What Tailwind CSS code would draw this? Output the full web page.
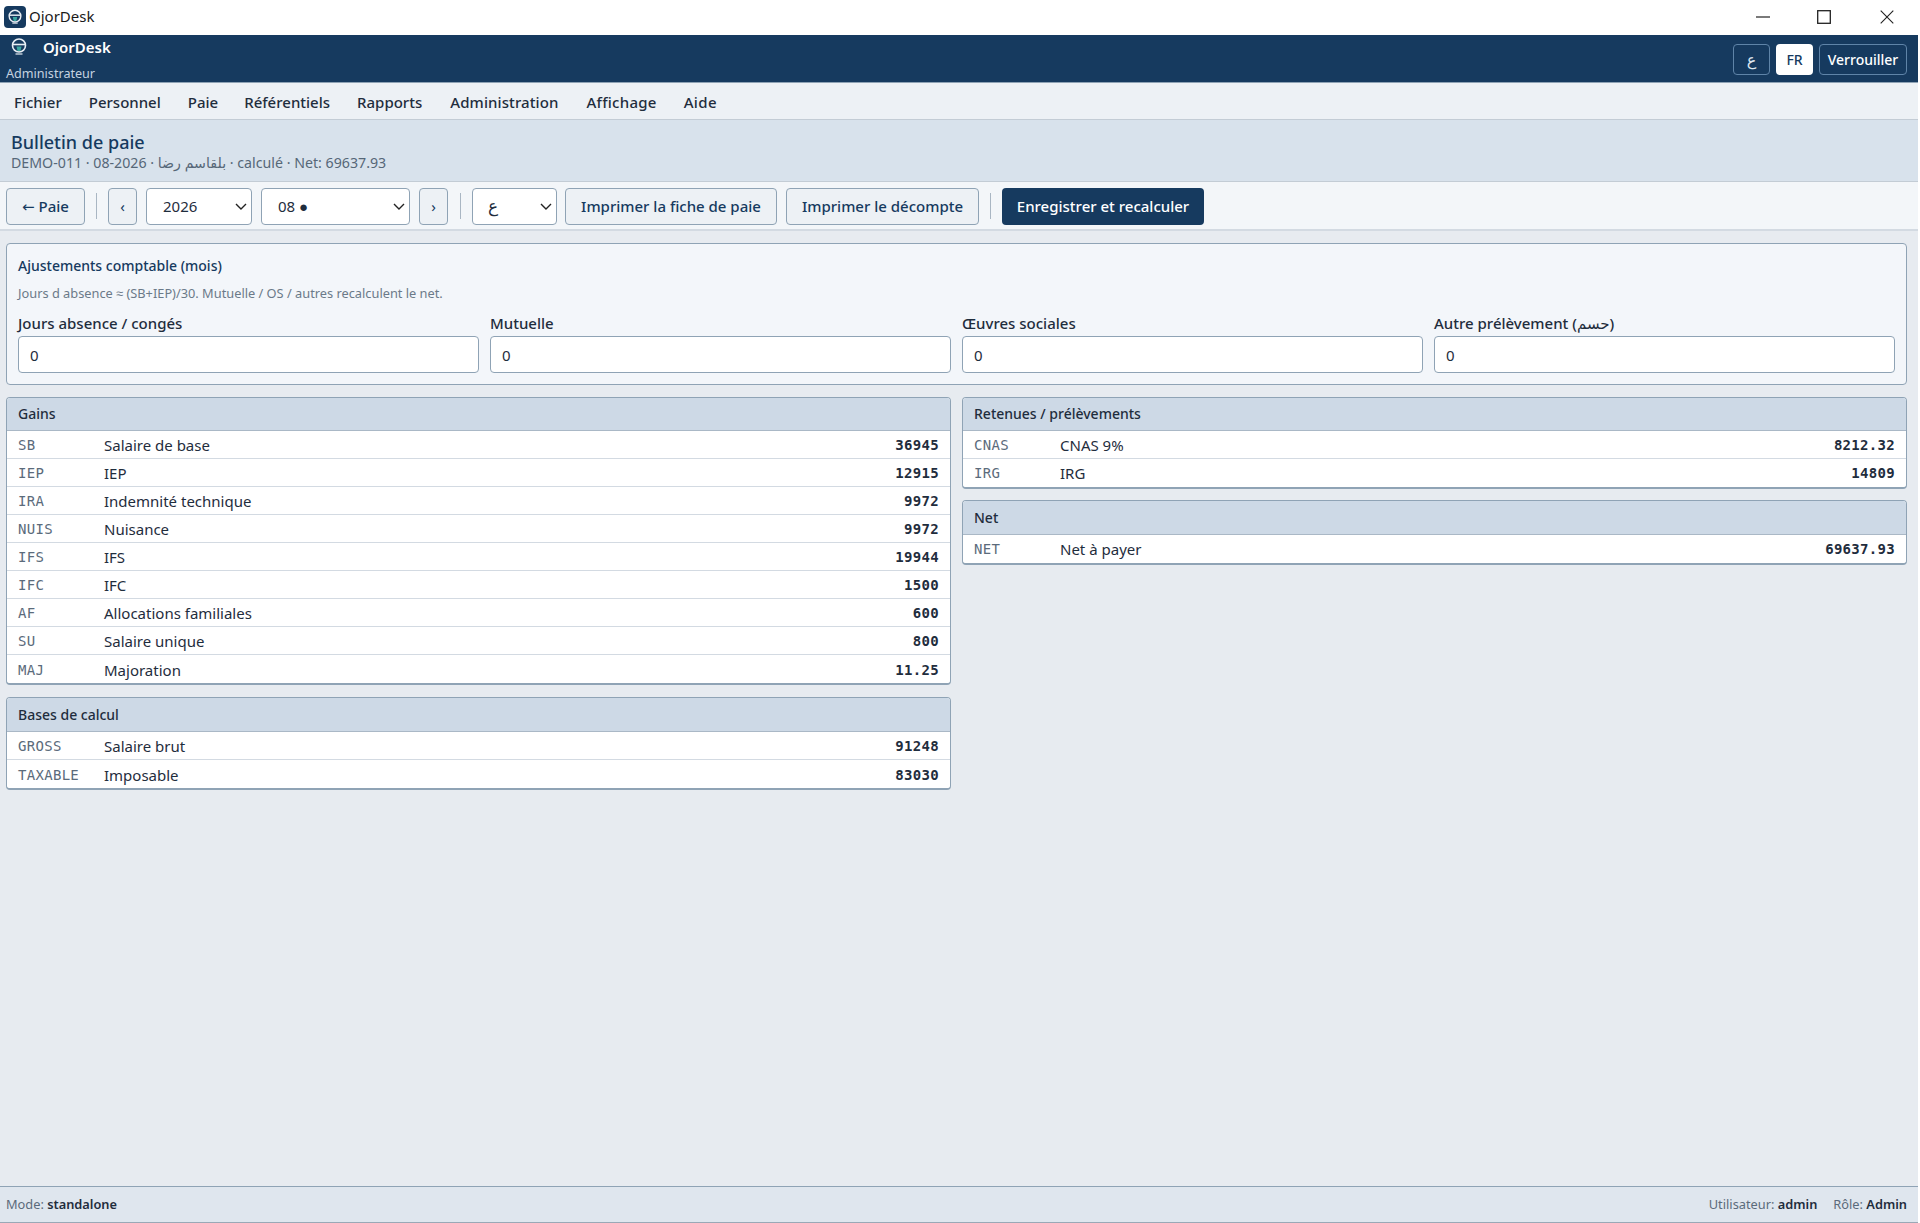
<!DOCTYPE html>
<html lang="fr"><head><meta charset="utf-8"><title>OjorDesk</title>
<script src="https://cdn.jsdelivr.net/npm/@tailwindcss/browser@4"></script></head>
<body class="h-[1223px] w-[1920px] overflow-hidden bg-white font-['Noto_Sans','Liberation_Sans','DejaVu_Sans',sans-serif] text-[#1f2d3d]">
<div class="flex h-[1223px] w-[1918px] flex-col border-b border-[#9aa8b6] bg-[#e7ebf0]">
 <!-- title bar -->
 <div class="flex h-[35px] shrink-0 items-center bg-white pb-[2px] pl-1">
  <div class="flex h-[22px] w-[22px] items-center justify-center rounded-[4px] bg-[#163a5f]">
   <svg viewBox="0 0 20 20" class="h-[18px] w-[18px]" fill="none" stroke="#e8eef4" stroke-width="1.6"><circle cx="10" cy="9" r="6.5"/><path d="M3.8 8h12.4"/><path d="M7 16.8h6" stroke-width="1.2"/><path d="M7.5 10h5l-1 4.5h-3z" fill="#3aa6a0" stroke="none"/></svg>
  </div>
  <span class="ml-[3px] text-[15px] text-[#1a1a1a]">OjorDesk</span>
  <div class="ml-auto flex items-center">
   <div class="flex w-[62px] justify-center"><svg width="14" height="14" viewBox="0 0 14 14" stroke="#222" stroke-width="1.2"><path d="M0 7h14"/></svg></div>
   <div class="flex w-[62px] justify-center pr-[2px]"><svg width="14" height="14" viewBox="0 0 14 14" fill="none" stroke="#222" stroke-width="1.3"><rect x=".7" y=".7" width="12.6" height="12.6"/></svg></div>
   <div class="flex w-[62px] justify-center"><svg width="14" height="14" viewBox="0 0 14 14" stroke="#222" stroke-width="1.1"><path d="M.7.7l12.6 12.6M13.3.7L.7 13.3"/></svg></div>
  </div>
 </div>
 <!-- app header -->
 <div class="flex h-[48px] shrink-0 justify-between border-b border-[#8fa3b5] bg-[#163a5f] pl-[6px] pr-[11px]">
  <div class="flex flex-col text-white">
   <div class="flex h-[27px] items-start">
    <svg viewBox="0 0 20 20" class="ml-[3px] mt-[2px] h-[20px] w-[20px]" fill="none" stroke="#e8eef4" stroke-width="1.6"><circle cx="10" cy="8.5" r="6.5"/><path d="M3.8 7.5h12.4"/><path d="M6.5 17h7" stroke-width="1.2"/><path d="M7.5 9.5h5l-1 4.5h-3z" fill="#3aa6a0" stroke="none"/></svg>
    <span class="ml-[14px] mt-[1px] text-[15px] leading-[22px] font-semibold">OjorDesk</span>
   </div>
   <span class="mt-[5px] text-[12.6px] leading-[16px] text-[#c5d3e0]">Administrateur</span>
  </div>
  <div class="flex items-center gap-[6px] pt-[1px]">
   <button class="flex h-[31px] w-[37px] items-center justify-center rounded-[4px] border border-[#5f84a8] text-[16px] text-[#dce6ef]">ع</button>
   <button class="h-[31px] w-[37px] rounded-[4px] bg-white text-[14px] font-medium text-[#163a5f]">FR</button>
   <button class="h-[31px] w-[88px] rounded-[4px] border border-[#5f84a8] text-[14px] font-medium text-white">Verrouiller</button>
  </div>
 </div>
 <!-- menu -->
 <div class="flex h-[37px] shrink-0 items-center gap-[27px] border-b border-[#c3ccd5] bg-[#edf1f5] pl-[14px] pt-[2px] text-[15px] font-medium text-[#1f2d3d]">
  <span>Fichier</span><span>Personnel</span><span>Paie</span><span class="-ml-[1px]">Référentiels</span><span>Rapports</span><span class="ml-[1px] tracking-[.1px]">Administration</span><span class="ml-[1px] tracking-[.25px]">Affichage</span><span class="tracking-[.4px]">Aide</span>
 </div>
 <!-- page title -->
 <div class="flex h-[62px] shrink-0 flex-col justify-center border-b border-[#c3ccd5] bg-[#d8e2ec] pl-[11px] pt-[2px]">
  <div class="text-[18px] leading-[22px] font-medium text-[#163a5f]">Bulletin de paie</div>
  <div class="text-[14.2px] leading-[20px] text-[#566778]">DEMO-011 · 08-2026 · بلقاسم رضا · calculé · Net: 69637.93</div>
 </div>
 <!-- toolbar -->
 <div class="flex h-[49px] shrink-0 items-center border-b-2 border-[#d3dae2] bg-[#f3f6f9] pl-[6px] pt-[1px] text-[15px]">
  <button class="h-[37px] w-[79px] rounded-[4px] border border-[#8fa3b5] bg-[#edf1f5] font-['Noto_Sans','DejaVu_Sans',sans-serif] font-medium text-[#163a5f]">← Paie</button>
  <div class="ml-[11px] mr-[11px] h-[26px] w-px bg-[#a9b6c3]"></div>
  <button class="h-[37px] w-[29px] rounded-[4px] border border-[#8fa3b5] bg-[#edf1f5] text-[#163a5f]">‹</button>
  <div class="relative ml-[9px] w-[106px]">
   <select class="h-[37px] w-full appearance-none rounded-[4px] border border-[#8fa3b5] bg-white pl-4"><option>2026</option></select>
   <svg class="pointer-events-none absolute right-[5px] top-[15px]" width="12" height="8" viewBox="0 0 12 8" fill="none" stroke="#222" stroke-width="1.4"><path d="M1 1l5 5 5-5"/></svg>
  </div>
  <div class="relative ml-[9px] w-[149px]">
   <select class="h-[37px] w-full appearance-none rounded-[4px] border border-[#8fa3b5] bg-white pl-4"><option>08 ●</option></select>
   <svg class="pointer-events-none absolute right-[5px] top-[15px]" width="12" height="8" viewBox="0 0 12 8" fill="none" stroke="#222" stroke-width="1.4"><path d="M1 1l5 5 5-5"/></svg>
  </div>
  <button class="ml-[9px] h-[37px] w-[29px] rounded-[4px] border border-[#8fa3b5] bg-[#edf1f5] text-[#163a5f]">›</button>
  <div class="ml-[12px] mr-[11px] h-[26px] w-px bg-[#a9b6c3]"></div>
  <div class="relative w-[85px]">
   <select class="h-[37px] w-full appearance-none rounded-[4px] border border-[#8fa3b5] bg-white pl-[15px] text-[17px]"><option>ع</option></select>
   <svg class="pointer-events-none absolute right-[5px] top-[15px]" width="12" height="8" viewBox="0 0 12 8" fill="none" stroke="#222" stroke-width="1.4"><path d="M1 1l5 5 5-5"/></svg>
  </div>
  <button class="ml-[8px] h-[37px] w-[212px] rounded-[4px] border border-[#8fa3b5] bg-[#edf1f5] font-medium text-[#163a5f]">Imprimer la fiche de paie</button>
  <button class="ml-[9px] h-[37px] w-[193px] rounded-[4px] border border-[#8fa3b5] bg-[#edf1f5] font-medium text-[#163a5f]">Imprimer le décompte</button>
  <div class="ml-[11px] mr-[11px] h-[26px] w-px bg-[#a9b6c3]"></div>
  <button class="h-[37px] w-[202px] rounded-[4px] bg-[#163a5f] font-medium text-white">Enregistrer et recalculer</button>
 </div>
 <!-- content -->
 <div class="flex min-h-0 flex-1 flex-col gap-[12px] px-[6px] pt-[12px] pr-[11px]">
  <div class="h-[142px] rounded-[4px] border border-[#8fa3b5] bg-[#f3f6fa] px-[11px] pt-[12px]">
   <div class="text-[14px] leading-[20px] font-medium text-[#163a5f]">Ajustements comptable (mois)</div>
   <div class="mt-[8px] text-[12.8px] leading-[18px] text-[#6b7a89]">Jours d absence ≈ (SB+IEP)/30. Mutuelle / OS / autres recalculent le net.</div>
   <div class="mt-[11px] grid grid-cols-4 gap-x-[11px]">
    <label class="flex flex-col"><span class="text-[15px] leading-[20px] font-medium text-[#1f2d3d]">Jours absence / congés</span><input value="0" class="mt-[3px] h-[37px] w-full rounded-[4px] border border-[#8fa3b5] bg-white px-[11px] text-[15px]"></label>
    <label class="flex flex-col"><span class="text-[15px] leading-[20px] font-medium text-[#1f2d3d]">Mutuelle</span><input value="0" class="mt-[3px] h-[37px] w-full rounded-[4px] border border-[#8fa3b5] bg-white px-[11px] text-[15px]"></label>
    <label class="flex flex-col"><span class="text-[15px] leading-[20px] font-medium text-[#1f2d3d]">Œuvres sociales</span><input value="0" class="mt-[3px] h-[37px] w-full rounded-[4px] border border-[#8fa3b5] bg-white px-[11px] text-[15px]"></label>
    <label class="flex flex-col"><span class="text-[15px] leading-[20px] font-medium text-[#1f2d3d]">Autre prélèvement (حسم)</span><input value="0" class="mt-[3px] h-[37px] w-full rounded-[4px] border border-[#8fa3b5] bg-white px-[11px] text-[15px]"></label>
   </div>
  </div>
  <div class="grid grid-cols-2 items-start gap-x-[11px]">
   <div class="flex flex-col gap-[12px]">
    <div class="overflow-hidden rounded-[4px] border border-b-2 border-[#8fa3b5] bg-white">
     <div class="flex h-[33px] items-center border-b border-[#aab8c6] bg-[#cdd9e6] px-[11px] pb-[1px] text-[14px] font-medium text-[#1f2d3d]">Gains</div>
     <div class="flex h-[28px] items-center border-b border-[#d3dae2] px-[11px] pt-[2px]"><span class="w-[86px] font-['DejaVu_Sans_Mono',monospace] text-[14px] tracking-[.3px] text-[#5b6b7b]">SB</span><span class="flex-1 text-[15px]">Salaire de base</span><span class="font-['DejaVu_Sans_Mono',monospace] text-[14px] font-bold tracking-[.3px]">36945</span></div>
     <div class="flex h-[28px] items-center border-b border-[#d3dae2] px-[11px] pt-[2px]"><span class="w-[86px] font-['DejaVu_Sans_Mono',monospace] text-[14px] tracking-[.3px] text-[#5b6b7b]">IEP</span><span class="flex-1 text-[15px]">IEP</span><span class="font-['DejaVu_Sans_Mono',monospace] text-[14px] font-bold tracking-[.3px]">12915</span></div>
     <div class="flex h-[28px] items-center border-b border-[#d3dae2] px-[11px] pt-[2px]"><span class="w-[86px] font-['DejaVu_Sans_Mono',monospace] text-[14px] tracking-[.3px] text-[#5b6b7b]">IRA</span><span class="flex-1 text-[15px]">Indemnité technique</span><span class="font-['DejaVu_Sans_Mono',monospace] text-[14px] font-bold tracking-[.3px]">9972</span></div>
     <div class="flex h-[28px] items-center border-b border-[#d3dae2] px-[11px] pt-[2px]"><span class="w-[86px] font-['DejaVu_Sans_Mono',monospace] text-[14px] tracking-[.3px] text-[#5b6b7b]">NUIS</span><span class="flex-1 text-[15px]">Nuisance</span><span class="font-['DejaVu_Sans_Mono',monospace] text-[14px] font-bold tracking-[.3px]">9972</span></div>
     <div class="flex h-[28px] items-center border-b border-[#d3dae2] px-[11px] pt-[2px]"><span class="w-[86px] font-['DejaVu_Sans_Mono',monospace] text-[14px] tracking-[.3px] text-[#5b6b7b]">IFS</span><span class="flex-1 text-[15px]">IFS</span><span class="font-['DejaVu_Sans_Mono',monospace] text-[14px] font-bold tracking-[.3px]">19944</span></div>
     <div class="flex h-[28px] items-center border-b border-[#d3dae2] px-[11px] pt-[2px]"><span class="w-[86px] font-['DejaVu_Sans_Mono',monospace] text-[14px] tracking-[.3px] text-[#5b6b7b]">IFC</span><span class="flex-1 text-[15px]">IFC</span><span class="font-['DejaVu_Sans_Mono',monospace] text-[14px] font-bold tracking-[.3px]">1500</span></div>
     <div class="flex h-[28px] items-center border-b border-[#d3dae2] px-[11px] pt-[2px]"><span class="w-[86px] font-['DejaVu_Sans_Mono',monospace] text-[14px] tracking-[.3px] text-[#5b6b7b]">AF</span><span class="flex-1 text-[15px]">Allocations familiales</span><span class="font-['DejaVu_Sans_Mono',monospace] text-[14px] font-bold tracking-[.3px]">600</span></div>
     <div class="flex h-[28px] items-center border-b border-[#d3dae2] px-[11px] pt-[2px]"><span class="w-[86px] font-['DejaVu_Sans_Mono',monospace] text-[14px] tracking-[.3px] text-[#5b6b7b]">SU</span><span class="flex-1 text-[15px]">Salaire unique</span><span class="font-['DejaVu_Sans_Mono',monospace] text-[14px] font-bold tracking-[.3px]">800</span></div>
     <div class="flex h-[28px] items-center px-[11px] pt-[2px]"><span class="w-[86px] font-['DejaVu_Sans_Mono',monospace] text-[14px] tracking-[.3px] text-[#5b6b7b]">MAJ</span><span class="flex-1 text-[15px]">Majoration</span><span class="font-['DejaVu_Sans_Mono',monospace] text-[14px] font-bold tracking-[.3px]">11.25</span></div>
    </div>
    <div class="overflow-hidden rounded-[4px] border border-b-2 border-[#8fa3b5] bg-white">
     <div class="flex h-[34px] items-center border-b border-[#aab8c6] bg-[#cdd9e6] px-[11px] text-[14px] font-medium text-[#1f2d3d]">Bases de calcul</div>
     <div class="flex h-[28px] items-center border-b border-[#d3dae2] px-[11px] pt-[2px]"><span class="w-[86px] font-['DejaVu_Sans_Mono',monospace] text-[14px] tracking-[.3px] text-[#5b6b7b]">GROSS</span><span class="flex-1 text-[15px]">Salaire brut</span><span class="font-['DejaVu_Sans_Mono',monospace] text-[14px] font-bold tracking-[.3px]">91248</span></div>
     <div class="flex h-[28px] items-center px-[11px] pt-[2px]"><span class="w-[86px] font-['DejaVu_Sans_Mono',monospace] text-[14px] tracking-[.3px] text-[#5b6b7b]">TAXABLE</span><span class="flex-1 text-[15px]">Imposable</span><span class="font-['DejaVu_Sans_Mono',monospace] text-[14px] font-bold tracking-[.3px]">83030</span></div>
    </div>
   </div>
   <div class="flex flex-col gap-[11px]">
    <div class="overflow-hidden rounded-[4px] border border-b-2 border-[#8fa3b5] bg-white">
     <div class="flex h-[33px] items-center border-b border-[#aab8c6] bg-[#cdd9e6] px-[11px] pb-[1px] text-[14px] font-medium text-[#1f2d3d]">Retenues / prélèvements</div>
     <div class="flex h-[28px] items-center border-b border-[#d3dae2] px-[11px] pt-[2px]"><span class="w-[86px] font-['DejaVu_Sans_Mono',monospace] text-[14px] tracking-[.3px] text-[#5b6b7b]">CNAS</span><span class="flex-1 text-[15px]">CNAS 9%</span><span class="font-['DejaVu_Sans_Mono',monospace] text-[14px] font-bold tracking-[.3px]">8212.32</span></div>
     <div class="flex h-[28px] items-center px-[11px] pt-[1px]"><span class="w-[86px] font-['DejaVu_Sans_Mono',monospace] text-[14px] tracking-[.3px] text-[#5b6b7b]">IRG</span><span class="flex-1 text-[15px]">IRG</span><span class="font-['DejaVu_Sans_Mono',monospace] text-[14px] font-bold tracking-[.3px]">14809</span></div>
    </div>
    <div class="overflow-hidden rounded-[4px] border border-b-2 border-[#8fa3b5] bg-white">
     <div class="flex h-[34px] items-center border-b border-[#aab8c6] bg-[#cdd9e6] px-[11px] text-[14px] font-medium text-[#1f2d3d]">Net</div>
     <div class="flex h-[28px] items-center px-[11px] pt-[1px]"><span class="w-[86px] font-['DejaVu_Sans_Mono',monospace] text-[14px] tracking-[.3px] text-[#5b6b7b]">NET</span><span class="flex-1 text-[15px]">Net à payer</span><span class="font-['DejaVu_Sans_Mono',monospace] text-[14px] font-bold tracking-[.3px]">69637.93</span></div>
    </div>
   </div>
  </div>
 </div>
 <!-- status -->
 <div class="flex h-[36px] shrink-0 items-center justify-between border-t border-[#8fa3b5] bg-[#dfe6ee] pl-[6px] pr-[11px] pt-[1px] text-[12.8px] text-[#5b6b7b]">
  <span>Mode: <b class="font-semibold text-[#1f2d3d]">standalone</b></span>
  <div class="flex gap-[16px]"><span>Utilisateur: <b class="font-semibold text-[#1f2d3d]">admin</b></span><span>Rôle: <b class="font-semibold text-[#1f2d3d]">Admin</b></span></div>
 </div>
</div>
</body></html>
